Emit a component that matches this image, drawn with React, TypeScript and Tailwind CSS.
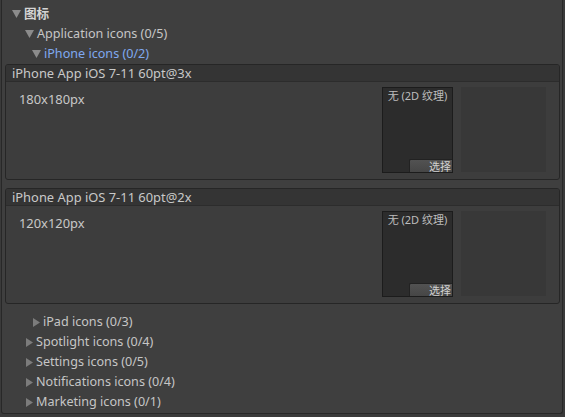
import React from "react";

const font = { fontFamily: '"Noto Sans", "Noto Sans CJK SC", sans-serif' };

function Down() {
  return (
    <svg width="9" height="8" viewBox="0 0 9 8" className="shrink-0">
      <path d="M0 0 H9 L4.5 8 Z" fill="#8c8c8c" />
    </svg>
  );
}

function Right() {
  return (
    <svg width="7" height="9" viewBox="0 0 7 9" className="shrink-0">
      <path d="M0 0 L7 4.5 L0 9 Z" fill="#7c7c7c" />
    </svg>
  );
}

function Row({
  indent,
  open,
  label,
  active,
  bold,
}: {
  indent: string;
  open?: boolean;
  label: string;
  active?: boolean;
  bold?: boolean;
}) {
  return (
    <div className={`flex h-[20px] items-center gap-[3px] ${indent}`}>
      {open ? <Down /> : <Right />}
      <span
        className={`pt-[1px] text-[12.6px] leading-none ${
          active ? "text-[#7fa9f0]" : bold ? "font-bold text-[#d4d4d4]" : "text-[#c6c6c6]"
        }`}
      >
        {label}
      </span>
    </div>
  );
}

function IconPanel({ title, size }: { title: string; size: string }) {
  return (
    <div className="ml-[3px] mr-[2px] overflow-hidden rounded-[3px] border border-[#262626] bg-[#3d3d3d]">
      <div className="flex h-[17px] items-center border-b border-[#2c2c2c] bg-[#343434] pl-[6px] pt-[1px] text-[12.9px] leading-none text-[#c8c8c8]">
        {title}
      </div>
      <div className="flex h-[97px] pt-[5px]">
        <div className="w-[376px] pl-[13px] pt-[6px] text-[12.9px] leading-none text-[#c8c8c8]">
          {size}
        </div>
        <div className="relative h-[86px] w-[71px] border border-[#1c1c1c] bg-[#2c2c2c]">
          <div className="pt-[2px] text-center text-[11px] leading-none text-[#bdbdbd]">
            无 (2D 纹理)
          </div>
          <div className="absolute bottom-0 right-0 flex h-[13px] w-[43px] items-center justify-end rounded-tl-[2px] border-l border-t border-[#222] bg-gradient-to-b from-[#525252] to-[#464646] pr-[1px] text-[11px] leading-none text-[#d0d0d0]">
            选择
          </div>
        </div>
        <div className="ml-[8px] h-[85px] w-[85px] bg-[#383838]" />
      </div>
    </div>
  );
}

export default function App() {
  return (
    <div className="h-[417px] w-[565px] bg-[#3a3a3a]" style={font}>
      <div className="ml-[1px] flex h-[414px] w-[562px] flex-col rounded-b-[3px] border-x border-b border-[#282828] bg-[#3f3f3f] pt-[4px]">
        <Row indent="pl-[10px]" open bold label="图标" />
        <Row indent="pl-[23px]" open label="Application icons (0/5)" />
        <Row indent="pl-[30px]" open active label="iPhone icons (0/2)" />
        <IconPanel title="iPhone App iOS 7-11 60pt@3x" size="180x180px" />
        <div className="h-[8px]" />
        <IconPanel title="iPhone App iOS 7-11 60pt@2x" size="120x120px" />
        <div className="h-[8px]" />
        <Row indent="pl-[31px]" label="iPad icons (0/3)" />
        <Row indent="pl-[24px]" label="Spotlight icons (0/4)" />
        <Row indent="pl-[24px]" label="Settings icons (0/5)" />
        <Row indent="pl-[24px]" label="Notifications icons (0/4)" />
        <Row indent="pl-[24px]" label="Marketing icons (0/1)" />
      </div>
    </div>
  );
}
